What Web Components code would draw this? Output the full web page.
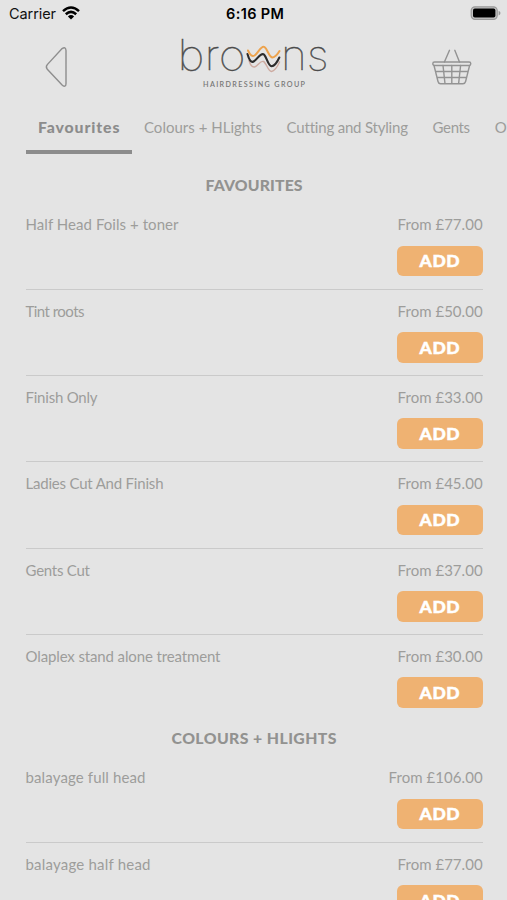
<!DOCTYPE html>
<html lang="en">
<head>
<meta charset="utf-8">
<title>Browns Hairdressing Group</title>
<style>
html,body{margin:0;height:100%;background:#e4e4e4;overflow:hidden}
body{font-family:Lato,"Open Sans",sans-serif}
</style>
</head>
<body>
<salon-app></salon-app>
<script>
// A single line of text whose tracking is adjusted to fill a given width.
class TrackedText extends HTMLElement{
  connectedCallback(){
    if(!this.shadowRoot){
      this.attachShadow({mode:'open'}).innerHTML=`<style>:host{display:inline-block;white-space:pre}span{display:inline-block}</style><span><slot></slot></span>`;
    }
    const s=this.shadowRoot.querySelector('span');
    const w=parseFloat(this.getAttribute('w'));
    const n=this.textContent.length;
    if(w&&n>1){
      const gap=(w-s.getBoundingClientRect().width)/(n-1);
      s.style.letterSpacing=gap+'px';
      s.style.marginRight=-gap+'px';
    }
  }
}
class StatusBar extends HTMLElement{
  constructor(){super();this.attachShadow({mode:'open'}).innerHTML=`<style>
:host{display:grid;grid-template-columns:1fr auto 1fr;align-items:center;height:27px;box-sizing:border-box;padding:0 6px 0 9px;font-family:Inter,sans-serif;font-size:14.5px;color:#111}
.l{display:flex;align-items:center;gap:6px}.t{font-weight:600;color:#000}.r{justify-self:end;display:flex}svg{display:block;margin-top:-1px}
</style><div class="l"><tracked-text w="47">Carrier</tracked-text><svg width="18" height="14" viewBox="0 0 18 14"><g fill="none" stroke="#000" stroke-width="2.5"><path d="M1 5.1Q9-2.2 17 5.1"/><path d="M3.8 8.2Q9 3.5 14.2 8.2"/></g><path d="M5.9 10.4Q9 7.7 12.1 10.4L9 13.6Z"/></svg></div>
<div class="t"><tracked-text w="58">6:16 PM</tracked-text></div>
<div class="r"><svg width="31" height="16" viewBox="0 0 31 16"><rect x="1.2" y="1.8" width="26" height="12.6" rx="3.8" fill="#c4c4c4" stroke="#999" stroke-width="1.2"/><rect x="3" y="3.6" width="22.4" height="9" rx="1.8"/><path d="M28.6 5.8Q30.5 6.5 30.5 8.1T28.6 10.4Z" fill="#999"/></svg></div>`}
}
class BrandHeader extends HTMLElement{
  constructor(){super();this.attachShadow({mode:'open'}).innerHTML=`<style>
:host{display:flex;justify-content:space-between;height:77px;box-sizing:border-box;padding:0 33px 0 44px}
svg{display:block}.back{margin-top:19px}.bag{margin-top:21px}.logo{margin-left:6px}
</style>
<svg class="back" width="26" height="42" viewBox="0 0 26 42"><path d="M18.100 2.600 3.300 18.600Q1.400 20.900 3.300 23.200L18.100 39.100C20 41 22 40.500 22 37.800V4.500Q21.700.100 18.100 2.600Z" fill="none" stroke="#8e8e8e" stroke-width="1.4"/></svg>
<svg class="logo" width="154" height="66" viewBox="177.500 27 154 66">
<g font-family="Inter" font-weight="100" font-size="42" fill="#4c4c4c" stroke="#4c4c4c" stroke-width=".35"><text x="178" y="70" textLength="68" lengthAdjust="spacingAndGlyphs">bro</text><text x="281.500" y="70" textLength="47.500" lengthAdjust="spacingAndGlyphs">ns</text></g>
<g fill="none" stroke-linecap="round" stroke-linejoin="round">
<path d="M249.500 60.500Q251.500 67.500 255 67C258.500 66 261 60 264 61.500C267 63 268.500 71.500 272 71.500Q276 71 280 62" stroke="#cdaaa0" stroke-width="1.4"/>
<path d="M248 54Q250.500 63.500 254 61.500C258 59.500 261 52 264.500 54.500C267.500 57.500 268.500 66 272 66.300Q276 66 279.800 57.500" stroke="#2c2c2c" stroke-width="2.100"/>
<path d="M248.500 50.500Q251.500 57.500 255 55.500C259 53 261.500 45 265 47C268 49 269.500 57.500 273 57.500Q276.500 57 280 51" stroke="#eda34d" stroke-width="2"/>
</g>
<text x="203.500" y="86.500" font-family="Lato" font-size="7.200" font-weight="600" fill="#777" textLength="102">HAIRDRESSING GROUP</text></svg>
<svg class="bag" width="42" height="40" viewBox="0 0 42 40"><g fill="none" stroke="#939393" stroke-width="1.4" stroke-linejoin="round" stroke-linecap="round"><path d="M12.400 14 17.500 2.300M27.500 14 22.800 2.300"/><rect x=".8" y="14" width="38" height="3.500" rx="1.700"/><path d="M2 17.500 6 33.500Q6.500 35.700 8.500 35.700H31Q33 35.700 33.600 33.500L37.600 17.500M3.500 23.500H36M5 29.500H34.500M11 17.500 13 35.700M19.800 17.500V35.700M28.600 17.500 26.600 35.700"/></g></svg>`}
}
class TabItem extends HTMLElement{
  constructor(){super();this.attachShadow({mode:'open'}).innerHTML=`<style>
:host{display:block;flex:none;box-sizing:border-box;height:50px;padding:13.400px 12.300px 0;line-height:20px;border-bottom:4px solid transparent;color:#9d9d9b}
:host([active]){font-weight:900;font-size:15.800px;color:#8c8c8c;border-color:#8c8c8c}
</style><slot></slot>`}
}
class TabStrip extends HTMLElement{
  constructor(){super();this.attachShadow({mode:'open'}).innerHTML=`<style>:host{display:flex;overflow:hidden;padding-left:25.600px;height:50px;font-size:15px}</style><slot></slot>`}
}
class SectionTitle extends HTMLElement{
  constructor(){super();this.attachShadow({mode:'open'}).innerHTML=`<style>:host{display:flex;height:35.200px;box-sizing:border-box;padding-bottom:2px;align-items:center;justify-content:center;font-weight:900;font-size:15.800px;color:#929290}</style><slot></slot>`}
}
class ServiceRow extends HTMLElement{
  connectedCallback(){
    if(this.shadowRoot)return;
    this.attachShadow({mode:'open'}).innerHTML=`<style>
:host{display:flex;justify-content:space-between;box-sizing:border-box;height:86.300px;padding-top:11px;border-bottom:1.500px solid #cacaca;line-height:20px;font-size:15px;color:#9d9d9b}
:host([last]){border-color:transparent}
.r{display:flex;flex-direction:column;align-items:flex-end;gap:11.500px}
button{display:flex;align-items:center;justify-content:center;width:86px;height:30.500px;border:0;border-radius:6px;background:#efb272;color:#fff;font:900 17.500px/1 Lato;-webkit-text-stroke:.5px #fff;padding:0}
</style><tracked-text w="${this.getAttribute('nw')}">${this.getAttribute('name')}</tracked-text><div class="r"><tracked-text w="${this.getAttribute('pw')}">${this.getAttribute('price')}</tracked-text><button><tracked-text w="40">ADD</tracked-text></button></div>`;
  }
}
class SalonApp extends HTMLElement{
  constructor(){super();this.attachShadow({mode:'open'}).innerHTML=`<style>
:host{display:block;width:507px;height:900px;overflow:hidden;background:#e4e4e4}
main{padding:14.200px 24.400px 0 25.500px}
</style>
<status-bar></status-bar><brand-header></brand-header>
<tab-strip><tab-item active><tracked-text w="81.500">Favourites</tracked-text></tab-item><tab-item><tracked-text w="118">Colours + HLights</tracked-text></tab-item><tab-item><tracked-text w="121">Cutting and Styling</tracked-text></tab-item><tab-item><tracked-text w="37.500">Gents</tracked-text></tab-item><tab-item><tracked-text>O</tracked-text></tab-item></tab-strip>
<main>
<section-title><tracked-text w="97">FAVOURITES</tracked-text></section-title>
<service-row name="Half Head Foils + toner" nw="153" price="From £77.00" pw="85"></service-row>
<service-row name="Tint roots" nw="59" price="From £50.00" pw="85"></service-row>
<service-row name="Finish Only" nw="72" price="From £33.00" pw="85"></service-row>
<service-row name="Ladies Cut And Finish" nw="138" price="From £45.00" pw="85"></service-row>
<service-row name="Gents Cut" nw="64.500" price="From £37.00" pw="85"></service-row>
<service-row last name="Olaplex stand alone treatment" nw="195" price="From £30.00" pw="85"></service-row>
<section-title><tracked-text w="165">COLOURS + HLIGHTS</tracked-text></section-title>
<service-row name="balayage full head" nw="120" price="From £106.00" pw="94"></service-row>
<service-row name="balayage half head" nw="125" price="From £77.00" pw="85"></service-row>
</main>`}
}
customElements.define('status-bar',StatusBar);
customElements.define('brand-header',BrandHeader);
customElements.define('tab-item',TabItem);
customElements.define('tab-strip',TabStrip);
customElements.define('section-title',SectionTitle);
customElements.define('service-row',ServiceRow);
customElements.define('salon-app',SalonApp);
customElements.define('tracked-text',TrackedText);
</script>
</body>
</html>
